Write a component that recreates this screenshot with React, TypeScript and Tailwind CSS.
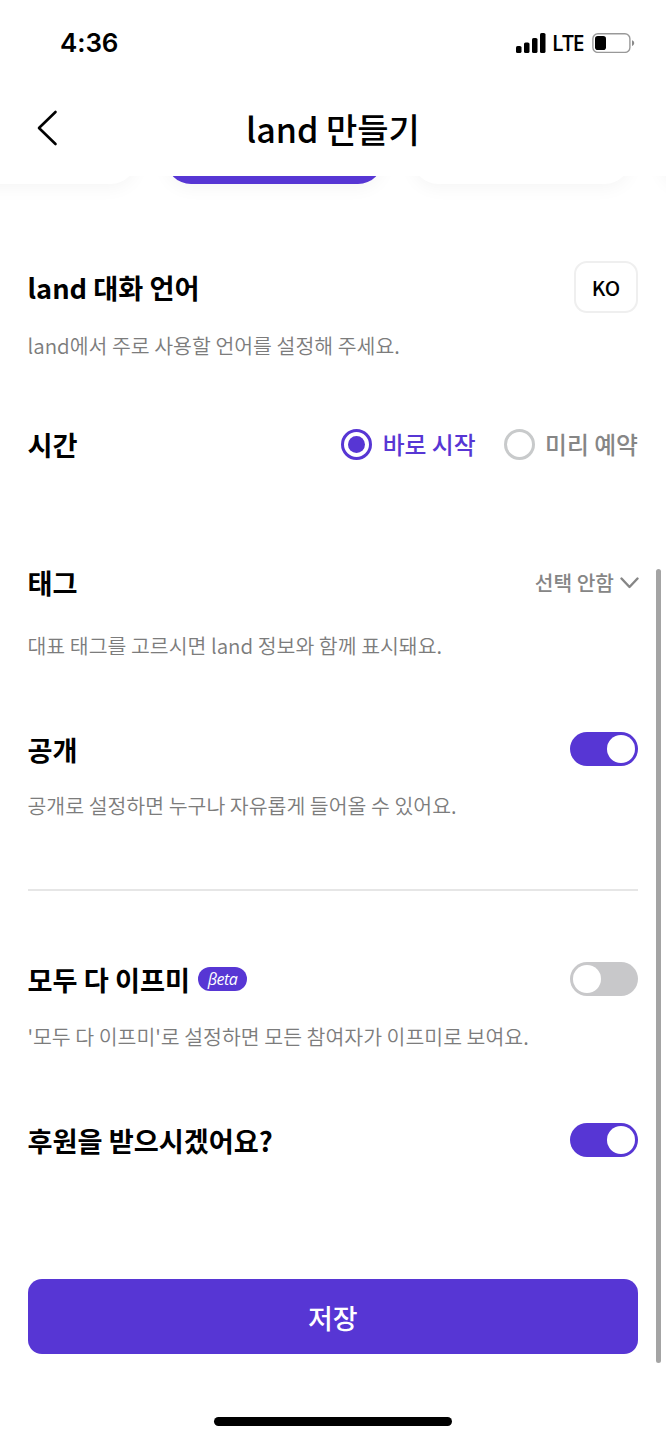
import React, { useState } from 'react';

function StatusBar() {
  return (
    <div className="flex h-[85px] items-center justify-between pl-[60px] pr-[31px]">
      <span className="font-['Inter'] text-[26px] font-semibold leading-none tracking-[-0.1px]">4:36</span>
      <div className="flex items-center">
        <svg width="30" height="20" viewBox="0 0 30 20" fill="#000">
          <rect x="0" y="13" width="5.5" height="7" rx="1.6" />
          <rect x="8" y="9.5" width="5.5" height="10.5" rx="1.6" />
          <rect x="16" y="5" width="5.5" height="15" rx="1.6" />
          <rect x="24" y="0" width="5.5" height="20" rx="1.6" />
        </svg>
        <span className="ml-[6px] w-[33px] whitespace-nowrap pt-px font-['Open_Sans'] text-[21px] font-semibold leading-none tracking-[-1.3px]">LTE</span>
        <svg className="ml-[7px]" width="43" height="20" viewBox="0 0 43 20">
          <rect x="0.9" y="0.8" width="37" height="18.6" rx="5" fill="none" stroke="#999" strokeWidth="1.4" />
          <rect x="3" y="3" width="11" height="14" rx="2.8" fill="#000" />
          <path d="M40 7.2c1.4.4 2.2 1.5 2.2 2.9s-.8 2.500-2.200 2.900z" fill="#8a8a8a" />
        </svg>
      </div>
    </div>
  );
}

function Toggle({ on, onChange }: { on: boolean; onChange: () => void }) {
  return (
    <button
      onClick={onChange}
      className={`flex h-[34px] w-[68px] items-center rounded-full px-[3px] ${on ? 'justify-end bg-[#5736d4]' : 'justify-start bg-[#c8c8ca]'}`}
    >
      <span className="h-[28px] w-[28px] rounded-full bg-white" />
    </button>
  );
}

function Radio({ label, checked, onClick }: { label: string; checked: boolean; onClick: () => void }) {
  return (
    <button onClick={onClick} className="flex items-center gap-[10.500px]">
      <span className={`flex h-[31px] w-[31px] items-center justify-center rounded-full border-[3px] ${checked ? 'border-[#5736d4]' : 'border-[#c8cacb]'}`}>
        {checked && <span className="h-[17px] w-[17px] rounded-full bg-[#5736d4]" />}
      </span>
      <span className={`text-[23.8px] font-medium leading-[36px] ${checked ? 'text-[#5736d4]' : 'text-[#868686]'}`}>{label}</span>
    </button>
  );
}

function Row({ title, badge, children }: { title: string; badge?: React.ReactNode; children?: React.ReactNode }) {
  return (
    <div className="flex h-[52px] items-center justify-between">
      <div className="flex items-center gap-2">
        <h2 className="text-[27.2px] font-bold leading-[40px]">{title}</h2>
        {badge}
      </div>
      {children}
    </div>
  );
}

function Hint({ children }: { children: React.ReactNode }) {
  return <p className="whitespace-nowrap text-[20.5px] font-[350] leading-[30px] text-[#7c7c7c]">{children}</p>;
}

export default function App() {
  const [start, setStart] = useState('now');
  const [isPublic, setIsPublic] = useState(true);
  const [allIfme, setAllIfme] = useState(false);
  const [donation, setDonation] = useState(true);

  return (
    <div className="relative flex h-[1440px] w-[666px] flex-col overflow-hidden bg-white font-['Noto_Sans_CJK_KR',sans-serif] text-black">
      <StatusBar />

      <header className="flex h-[91px] items-center px-[36px] pb-[5px]">
        <button className="w-[40px]">
          <svg width="22" height="36" viewBox="0 0 22 36" fill="none" stroke="#000" strokeWidth="2.6" strokeLinecap="round" strokeLinejoin="round">
            <path d="M19.500 2L3 18l16.500 16" />
          </svg>
        </button>
        <h1 className="flex-1 pt-px text-center text-[34px] font-medium leading-[50px]">land 만들기</h1>
        <div className="w-[40px]" />
      </header>

      {/* bottom edge of the scrolled card carousel */}
      <div className="flex h-[40px] shrink-0 items-end gap-[30px] overflow-hidden pb-[32px]">
        <div className="-ml-[81px] h-[100px] w-[217px] shrink-0 rounded-[25px] bg-white shadow-[0_4px_18px_rgba(0,0,0,0.045)]" />
        <div className="h-[100px] w-[217px] shrink-0 rounded-[25px] bg-[#5736d4] shadow-[0_4px_18px_rgba(0,0,0,0.045)]" />
        <div className="h-[100px] w-[217px] shrink-0 rounded-[25px] bg-white shadow-[0_4px_18px_rgba(0,0,0,0.045)]" />
        <div className="h-[100px] w-[217px] shrink-0 rounded-[25px] bg-white shadow-[0_4px_18px_rgba(0,0,0,0.045)]" />
      </div>

      <main className="flex flex-col pl-[27.500px] pr-[28px] pt-[45px]">
        <section>
          <Row title="land 대화 언어">
            <button className="h-[52px] w-[64px] rounded-[13px] border-2 border-[#efefef] text-[20.5px] font-medium leading-none">KO</button>
          </Row>
          <div className="mt-[17px]"><Hint>land에서 주로 사용할 언어를 설정해 주세요.</Hint></div>
        </section>

        <section className="mt-[58px]">
          <Row title="시간">
            <div className="flex gap-[28px]">
              <Radio label="바로 시작" checked={start === 'now'} onClick={() => setStart('now')} />
              <Radio label="미리 예약" checked={start === 'later'} onClick={() => setStart('later')} />
            </div>
          </Row>
        </section>

        <section className="mt-[86px]">
          <Row title="태그">
            <button className="-mr-px flex items-center gap-[6px] text-[20.3px] font-medium leading-[30px] text-[#868686]">
              선택 안함
              <svg className="mt-[2px]" width="19" height="12" viewBox="0 0 19 12" fill="none" stroke="#868686" strokeWidth="2.4" strokeLinecap="round" strokeLinejoin="round">
                <path d="M1.500 1.500l8 8.500 8-8.500" />
              </svg>
            </button>
          </Row>
          <div className="mt-[22px]"><Hint>대표 태그를 고르시면 land 정보와 함께 표시돼요.</Hint></div>
        </section>

        <section className="mt-[63px]">
          <Row title="공개">
            <Toggle on={isPublic} onChange={() => setIsPublic(!isPublic)} />
          </Row>
          <div className="mt-[15px]"><Hint>공개로 설정하면 누구나 자유롭게 들어올 수 있어요.</Hint></div>
        </section>

        <hr className="mt-[69px] border-t-2 border-[#e6e6e6]" />

        <section className="mt-[62px]">
          <Row
            title="모두 다 이프미"
            badge={
              <span className="flex h-[24px] w-[49px] items-center justify-center rounded-full bg-[#5736d4] font-['Open_Sans'] text-[16px] font-medium italic leading-none tracking-[-0.5px] text-white">
                βeta
              </span>
            }
          >
            <Toggle on={allIfme} onChange={() => setAllIfme(!allIfme)} />
          </Row>
          <div className="mt-[16px]"><Hint>'모두 다 이프미'로 설정하면 모든 참여자가 이프미로 보여요.</Hint></div>
        </section>

        <section className="mt-[63px]">
          <Row title="후원을 받으시겠어요?">
            <Toggle on={donation} onChange={() => setDonation(!donation)} />
          </Row>
        </section>

        <button className="mt-[113px] h-[75px] rounded-[14px] bg-[#5736d4] pt-[3px] text-[27px] font-medium text-white">저장</button>
      </main>

      <div className="mx-auto mt-[63px] h-[9px] w-[238px] rounded-full bg-black" />

      {/* scroll indicator */}
      <div className="absolute right-[5px] top-[569px] h-[794px] w-[5px] rounded-full bg-[#a4a4a4]" />
    </div>
  );
}
